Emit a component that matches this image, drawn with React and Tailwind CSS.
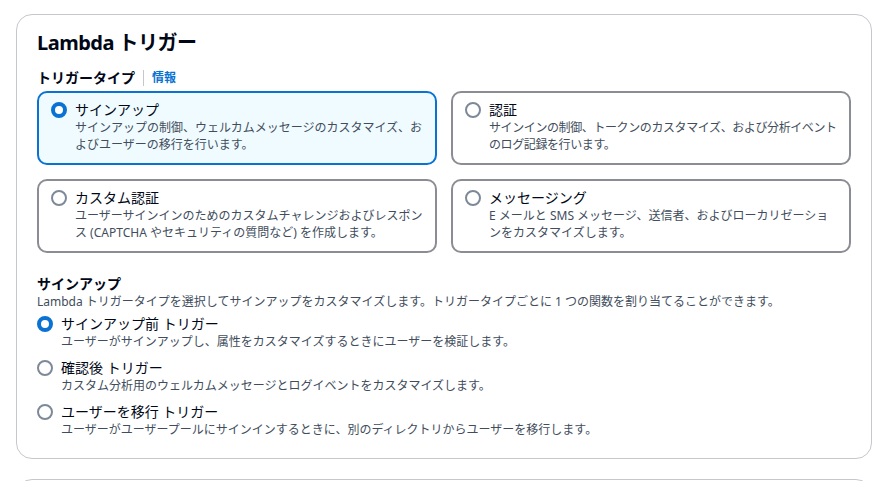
import React, { useState } from 'react';

const tiles = [
  {
    id: 'signup',
    title: 'サインアップ',
    desc: 'サインアップの制御、ウェルカムメッセージのカスタマイズ、およびユーザーの移行を行います。',
    tight: false,
  },
  {
    id: 'auth',
    title: '認証',
    desc: 'サインインの制御、トークンのカスタマイズ、および分析イベントのログ記録を行います。',
    tight: true,
  },
  {
    id: 'custom',
    title: 'カスタム認証',
    desc: 'ユーザーサインインのためのカスタムチャレンジおよびレスポンス (CAPTCHA やセキュリティの質問など) を作成します。',
    tight: false,
  },
  {
    id: 'messaging',
    title: 'メッセージング',
    desc: 'E メールと SMS メッセージ、送信者、およびローカリゼーションをカスタマイズします。',
    tight: false,
  },
];

const triggers = [
  { id: 'pre', title: 'サインアップ前 トリガー', desc: 'ユーザーがサインアップし、属性をカスタマイズするときにユーザーを検証します。' },
  { id: 'post', title: '確認後 トリガー', desc: 'カスタム分析用のウェルカムメッセージとログイベントをカスタマイズします。' },
  { id: 'migrate', title: 'ユーザーを移行 トリガー', desc: 'ユーザーがユーザープールにサインインするときに、別のディレクトリからユーザーを移行します。' },
];

function Radio({ checked }) {
  return checked ? (
    <span className="mt-[1px] box-border h-4 w-4 shrink-0 rounded-full border-[4px] border-[#0972d3] bg-white" />
  ) : (
    <span className="mt-[1px] box-border h-4 w-4 shrink-0 rounded-full border-2 border-[#7d8998] bg-white" />
  );
}

export default function App() {
  const [tile, setTile] = useState('signup');
  const [trigger, setTrigger] = useState('pre');

  return (
    <div
      className="h-screen overflow-hidden bg-white pl-[16px] pr-[18px] pt-[14px] text-[#000716]"
      style={{ fontFamily: '"Noto Sans", "Noto Sans CJK JP", sans-serif' }}
    >
      <div className="rounded-[16px] border border-[#c6c6cd] px-[20px] pb-[19px] pt-[14px]">
        <h2 className="text-[20px] font-bold leading-[28px] tracking-tight">Lambda トリガー</h2>

        <div className="mt-[11px] flex items-center">
          <span className="text-[14px] font-bold leading-[20px]">トリガータイプ</span>
          <span className="mx-[8px] h-[16px] w-px bg-[#c6c6cd]" />
          <a className="text-[12px] font-bold leading-[20px] text-[#0972d3]">情報</a>
        </div>

        <div className="mt-[3px] grid grid-cols-2 gap-x-[14px] gap-y-[14px]">
          {tiles.map((t) => {
            const on = tile === t.id;
            return (
              <button
                key={t.id}
                onClick={() => setTile(t.id)}
                className={
                  on
                    ? 'flex gap-[8px] rounded-[10px] border-2 border-[#0972d3] bg-[#f0fbff] pb-[10px] pl-[12px] pr-[10px] pt-[8px] text-left'
                    : 'flex gap-[8px] rounded-[10px] border-2 border-[#8c8c94] bg-white pb-[10px] pl-[12px] pr-[10px] pt-[8px] text-left'
                }
              >
                <Radio checked={on} />
                <div className="min-w-0 flex-1">
                  <div className="text-[14px] leading-[18px]">{t.title}</div>
                  <div
                    className={
                      t.tight
                        ? 'text-[12px] leading-[17px] tracking-[-0.4px] text-[#414d5c]'
                        : 'text-[12px] leading-[17px] text-[#414d5c]'
                    }
                  >
                    {t.desc}
                  </div>
                </div>
              </button>
            );
          })}
        </div>

        <div className="mt-[21px] text-[14px] font-bold leading-[20px]">サインアップ</div>
        <div className="text-[12px] leading-[16px] text-[#414d5c]">
          Lambda トリガータイプを選択してサインアップをカスタマイズします。トリガータイプごとに 1 つの関数を割り当てることができます。
        </div>

        <div className="mt-[5px] flex flex-col gap-[8px]">
          {triggers.map((t) => (
            <button key={t.id} onClick={() => setTrigger(t.id)} className="flex gap-[8px] text-left">
              <Radio checked={trigger === t.id} />
              <div>
                <div className="text-[14px] leading-[18px]">{t.title}</div>
                <div className="text-[12px] leading-[18px] text-[#414d5c]">{t.desc}</div>
              </div>
            </button>
          ))}
        </div>
      </div>

      <div className="mt-[20px] h-[80px] rounded-[16px] border border-[#c6c6cd]" />
    </div>
  );
}
